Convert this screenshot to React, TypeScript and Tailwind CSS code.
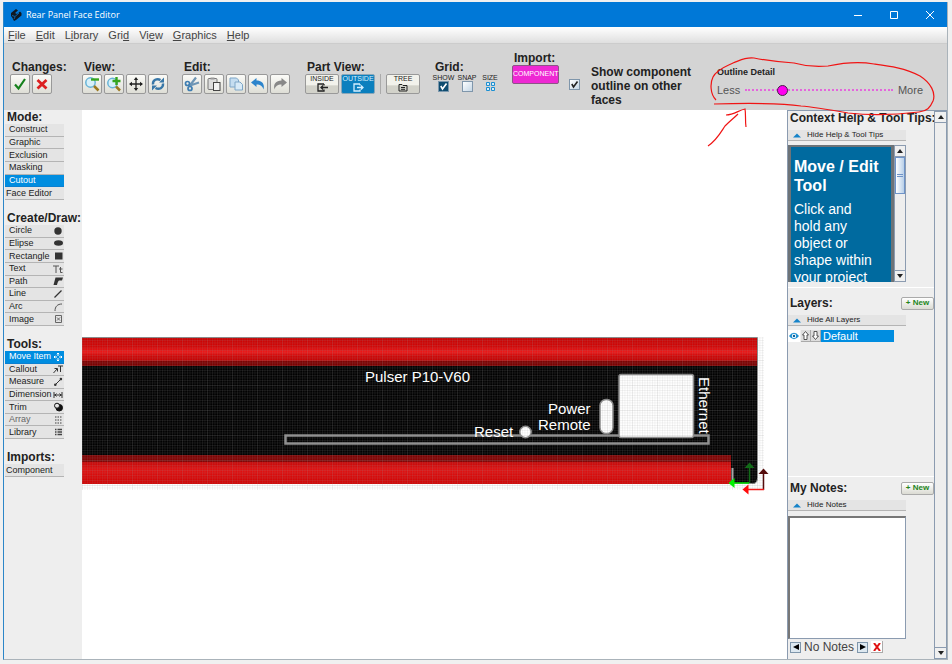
import React, { useState } from 'react';

interface RowItem {
  name: string;
  icon?: React.ReactNode;
  muted?: boolean;
  flush?: boolean;
}

const ICON = 'h-[10px] w-[10px] shrink-0';

const modes: RowItem[] = [
  { name: 'Construct' },
  { name: 'Graphic' },
  { name: 'Exclusion' },
  { name: 'Masking' },
  { name: 'Cutout' },
  { name: 'Face Editor', flush: true },
];

const shapes: RowItem[] = [
  { name: 'Circle', icon: <circle cx="5" cy="5" r="3.7" fill="#333" /> },
  { name: 'Elipse', icon: <ellipse cx="5.5" cy="5" rx="4.5" ry="2.8" fill="#333" /> },
  { name: 'Rectangle', icon: <rect x="2" y="1.5" width="7.5" height="7" fill="#333" /> },
  { name: 'Text', icon: <path d="M0 2h6M3 2v7M6 5h3.500M7.500 3v5.500h2" fill="none" stroke="#555" /> },
  { name: 'Path', icon: <path d="M2.500 1.500H10L9 4.500H6C5 5 4.500 7 4 9H.5z" fill="#333" /> },
  { name: 'Line', icon: <path d="M1.500 8.500l7-7" stroke="#333" strokeWidth="1.300" /> },
  { name: 'Arc', icon: <path d="M2 9c0-4.500 2.500-7 7-7" fill="none" stroke="#555" /> },
  {
    name: 'Image',
    icon: (
      <g fill="none" stroke="#666">
        <path d="M2.500 1.500h6v7h-6z" />
        <path d="M4 3.500l3 3M7 3.500l-3 3" />
      </g>
    ),
  },
];

const tools: RowItem[] = [
  {
    name: 'Move Item',
    icon: <path d="M5 1v3M5 6v3M1 5h3M6 5h3M3.800 2.200L5 1l1.200 1.200M3.800 7.800L5 9l1.200-1.200M2.200 3.800L1 5l1.200 1.200M7.800 3.800L9 5 7.800 6.200" fill="none" stroke="#fff" />,
  },
  { name: 'Callout', icon: <path d="M.5 9L4 5M1.500 4.500H4.500V7.500M5 2H10M7.500 2V8" fill="none" stroke="#333" /> },
  {
    name: 'Measure',
    icon: (
      <g fill="#333">
        <path d="M2 8l6-6" stroke="#333" />
        <circle cx="2.300" cy="7.700" r="1.300" />
        <circle cx="7.900" cy="2.100" r="1.300" />
      </g>
    ),
  },
  { name: 'Dimension', icon: <path d="M1 2v6M9 2v6M1 5h8M3.500 3.500L2 5l1.500 1.500M6.500 3.500L8 5 6.500 6.500" fill="none" stroke="#333" /> },
  {
    name: 'Trim',
    icon: (
      <g stroke="#111">
        <circle cx="6.200" cy="5.700" r="3.300" fill="#111" />
        <circle cx="4" cy="3.700" r="2.500" fill="#e4e4e4" />
      </g>
    ),
  },
  { name: 'Array', muted: true, icon: <path d="M2 2h7M2 5h7M2 8h7" stroke="#777" strokeWidth="1.500" strokeDasharray="1.500 1" /> },
  { name: 'Library', icon: <path d="M2 2.500h1.500M4.500 2.500H9M2 5h1.500M4.500 5H9M2 7.500h1.500M4.500 7.500H9" stroke="#444" strokeWidth="1.500" /> },
];

const menus = [
  ['', 'F', 'ile'],
  ['', 'E', 'dit'],
  ['L', 'i', 'brary'],
  ['Gri', 'd', ''],
  ['Vi', 'e', 'w'],
  ['', 'G', 'raphics'],
  ['', 'H', 'elp'],
];

const SideSection: React.FC<{
  title: string;
  items: RowItem[];
  height: string;
  selected?: string;
  onSelect?: (name: string) => void;
}> = ({ title, items, height, selected, onSelect }) => (
  <section>
    <h2 className="pl-[3px] text-[12px] leading-[14px] font-bold whitespace-nowrap">{title}</h2>
    <div className={`ml-px flex w-[59px] flex-col ${height}`}>
      {items.map((item) => (
        <button
          key={item.name}
          onClick={() => onSelect?.(item.name)}
          className={`flex min-h-0 flex-1 items-center justify-between border-b pr-px text-[9px] leading-[11px] whitespace-nowrap ${
            item.flush ? 'pl-px' : 'pl-1'
          } ${
            item.name === selected
              ? 'border-[#0b7fd0] bg-[#008de0] text-white'
              : 'border-[#b4b4b4] bg-[#e4e4e4]'
          } ${item.muted ? 'text-[#666]' : ''}`}
        >
          {item.name}
          {item.icon && <svg viewBox="0 0 10 10" className={ICON}>{item.icon}</svg>}
        </button>
      ))}
    </div>
  </section>
);

const ToolButton: React.FC<{ label: string; children: React.ReactNode }> = ({ label, children }) => (
  <button
    aria-label={label}
    className="flex h-5 w-5 items-center justify-center rounded-xs border border-[#999] bg-linear-to-b from-[#fbfbf8] to-[#deded6]"
  >
    <svg viewBox="0 0 16 16" className="h-4 w-4">{children}</svg>
  </button>
);

const ToolGroup: React.FC<{ title: string; className?: string; children: React.ReactNode }> = ({ title, className = '', children }) => (
  <div className={`shrink-0 ${className}`}>
    <h2 className="pl-0.5 text-[12px] leading-[14px] font-bold whitespace-nowrap">{title}</h2>
    <div className="flex gap-0.5">{children}</div>
  </div>
);

const ViewButton: React.FC<{ text: string; active?: boolean; children: React.ReactNode }> = ({ text, active, children }) => (
  <button
    className={`flex h-5 w-[34px] flex-col items-center rounded-xs border ${
      active
        ? 'border-[#8ba7b8] bg-[#0b7fbe] text-[#d5efff]'
        : 'border-[#999] bg-linear-to-b from-[#f2f2ec] from-55% to-[#d2d2ca] to-60% text-[#222]'
    }`}
  >
    <span className="text-[7px] leading-[8px]">{text}</span>
    <svg viewBox="0 0 12 9" className="h-[9px] w-3" fill="none" stroke="currentColor" strokeWidth="1.300">{children}</svg>
  </button>
);

const CheckBox: React.FC<{ id: string; dark?: boolean; defaultChecked?: boolean }> = ({ id, dark, defaultChecked }) => {
  const [checked, setChecked] = useState(!!defaultChecked);
  return (
    <span className="relative block h-[11px] w-[11px] shrink-0">
      <input
        id={id}
        type="checkbox"
        checked={checked}
        onChange={(e) => setChecked(e.target.checked)}
        className={`block h-[11px] w-[11px] appearance-none border ${
          dark ? 'border-[#7c98ad] bg-[#0f4c70]' : 'border-[#7f96ab] bg-linear-to-br from-white to-[#c5d7e6]'
        }`}
      />
      {checked && (
        <svg viewBox="0 0 11 11" className="pointer-events-none absolute inset-0 h-[11px] w-[11px]">
          <path d="M2.800 5l1.700 3 4-5.500" fill="none" stroke={dark ? '#fff' : '#222'} strokeWidth="1.600" />
        </svg>
      )}
    </span>
  );
};

const ArrowButton: React.FC<{ label: string; down?: boolean }> = ({ label, down }) => (
  <button aria-label={label} className="flex h-3 w-full shrink-0 items-center justify-center border-y border-[#8b9bb0] bg-[#f0f0f0]">
    <svg viewBox="0 0 8 4" className="h-1 w-2">
      <path d={down ? 'M1 0h6L4 4z' : 'M1 4h6L4 0z'} fill="#222" />
    </svg>
  </button>
);

const CollapseBar: React.FC<{ text: string }> = ({ text }) => (
  <button className="flex h-[11px] w-[118px] items-center gap-1.5 border-b border-[#b4b4b4] bg-[#e4e4e4] pl-[5px] text-[8px] leading-[10px] whitespace-nowrap">
    <svg viewBox="0 0 8 5" className="h-[5px] w-2">
      <path d="M0 4.500h8L4 .5z" fill="#1583c9" />
    </svg>
    {text}
  </button>
);

const PanelHeader: React.FC<{ text: string }> = ({ text }) => (
  <div className="flex items-center justify-between pl-0.5">
    <h2 className="text-[12px] leading-[14px] font-bold">{text}</h2>
    <button className="h-[13px] w-[33px] rounded-xs border border-[#aaa] bg-linear-to-b from-white to-[#dbdbd3] text-[8px] leading-[10px] font-bold whitespace-nowrap text-[#23851b]">
      + New
    </button>
  </div>
);

// Rear panel artwork, drawn at one unit per pixel
const PanelDrawing: React.FC = () => (
  <svg className="block h-full w-full bg-white" fontFamily="Liberation Sans, Arial, sans-serif">
    <defs>
      <pattern id="grid" width="2.500" height="2.500" patternUnits="userSpaceOnUse">
        <path d="M0 .5h2.500M.5 0v2.500" stroke="#999" strokeWidth=".7" strokeOpacity=".18" />
      </pattern>
      <pattern id="grid-major" width="25" height="25" patternUnits="userSpaceOnUse">
        <path d="M0 .5h25M.5 0v25" stroke="#999" strokeWidth="1" strokeOpacity=".08" />
      </pattern>
      <linearGradient id="topRail" x1="0" y1="0" x2="0" y2="1">
        <stop offset="0" stopColor="#c80000" />
        <stop offset=".3" stopColor="#d20404" />
        <stop offset=".5" stopColor="#ec1616" />
        <stop offset=".65" stopColor="#ce0505" />
        <stop offset=".8" stopColor="#c40202" />
        <stop offset=".82" stopColor="#7c0000" />
        <stop offset="1" stopColor="#7c0000" />
      </linearGradient>
      <linearGradient id="bottomRail" x1="0" y1="0" x2="0" y2="1">
        <stop offset="0" stopColor="#7d0000" />
        <stop offset=".23" stopColor="#820202" />
        <stop offset=".25" stopColor="#c80505" />
        <stop offset=".5" stopColor="#e01010" />
        <stop offset="1" stopColor="#cf0000" />
      </linearGradient>
    </defs>
    <path d="M0 227h675v142q0 5-5 5H0z" fill="#000" />
    <path d="M0 227.500h675.500v141q0 5-5 5H650" fill="none" stroke="#888" />
    <rect y="228" width="675" height="28" fill="url(#topRail)" />
    <rect y="345" width="649" height="29" fill="url(#bottomRail)" />
    <path d="M650.500 358v16" stroke="#aaa" strokeWidth="2" />
    <rect x="203.500" y="325.500" width="423" height="8" fill="none" stroke="#8d8d8d" strokeWidth="2.500" />
    <rect x="537" y="264.500" width="74.500" height="63" rx="2" fill="#fff" stroke="#888" strokeWidth="1.500" />
    <rect x="518" y="289.500" width="13" height="34" rx="6" fill="#fff" stroke="#888" strokeWidth="1.500" />
    <circle cx="443.500" cy="322" r="5.700" fill="#fff" stroke="#888" strokeWidth="1.500" />
    <rect y="227" width="682" height="153" fill="url(#grid)" />
    <rect y="227" width="682" height="153" fill="url(#grid-major)" />
    <g fill="#fff" fontSize="15">
      <text x="283" y="272">Pulser P10-V60</text>
      <text x="392" y="327">Reset</text>
      <text x="466" y="304">Power</text>
      <text x="456" y="320">Remote</text>
      <text transform="translate(617 267) rotate(90)">Ethernet</text>
    </g>
    <g strokeWidth="1.500">
      <path d="M667.500 373v-18" stroke="#126b18" />
      <path d="M667.500 352.500l5 5.500h-10z" fill="#126b18" />
      <path d="M667 373h-16" stroke="#00e600" />
      <path d="M646.500 373l6-5v10z" fill="#00f000" />
      <path d="M681.500 380v-18" stroke="#550c0c" />
      <path d="M681.500 358.500l5 5.500h-10z" fill="#550c0c" />
      <path d="M682 379.500h-17" stroke="#f01818" />
      <path d="M660.500 379.500l6-5v10z" fill="#ff0a0a" />
    </g>
  </svg>
);

const App: React.FC = () => {
  const [mode, setMode] = useState('Cutout');
  const [tool, setTool] = useState('Move Item');
  const [detail, setDetail] = useState(23);

  return (
    <div className="flex h-screen min-h-[600px] flex-col bg-[#f0f0f0] pt-0.5 pr-1 pb-1 pl-[3px] font-['Liberation_Sans',Arial,sans-serif] text-[#222]">
      <div className="flex min-h-0 flex-1 flex-col border border-t-0 border-[#aab3ba] border-l-[#2c86c8] bg-[#eee]">
        {/* Title bar */}
        <header className="flex h-[25px] shrink-0 items-center bg-[#0078d7] pr-3 pl-1.5 text-white">
          <svg viewBox="0 0 12 14" className="mr-1 h-[14px] w-3">
            <path d="M1 5l5-4 2 1.500-3 2.500 2 1 3-2.500 1.500 1.500v2.500L6 12l-2 1-1.500-3L1 8z" fill="#101820" />
            <path d="M2 7.500l3 1 4-3.500M4 11l1-2" fill="none" stroke="#0b62a8" />
          </svg>
          <h1 className="font-['Open_Sans',sans-serif] text-[9px]">Rear Panel Face Editor</h1>
          <div className="ml-auto flex items-center gap-[26px]">
            <button aria-label="Minimize">
              <svg viewBox="0 0 10 10" className="h-[10px] w-[10px]"><path d="M1 5.500h8" stroke="#fff" /></svg>
            </button>
            <button aria-label="Maximize">
              <svg viewBox="0 0 10 10" className="h-[10px] w-[10px]"><path d="M1.500 1.500h7v7h-7z" fill="none" stroke="#fff" /></svg>
            </button>
            <button aria-label="Close">
              <svg viewBox="0 0 10 10" className="h-[10px] w-[10px]"><path d="M1 1l8 8M9 1L1 9" stroke="#fff" /></svg>
            </button>
          </div>
        </header>

        {/* Menu bar */}
        <nav className="flex h-[17px] shrink-0 items-center gap-[10px] border-b border-[#ccc] bg-linear-to-b from-white to-[#dfdfdf] pl-1 text-[11px] text-[#444]">
          {menus.map(([before, key, after]) => (
            <button key={before + key + after} className="leading-[14px]">
              {before}<span className="underline">{key}</span>{after}
            </button>
          ))}
        </nav>

        {/* Toolbar */}
        <div className="flex h-[66px] shrink-0 items-start bg-[#d4d4d4] pr-6 pl-1.5">
          <ToolGroup title="Changes:" className="w-[72px] pt-4">
            <ToolButton label="Accept"><path d="M3 8.500l3.500 4L13 3" fill="none" stroke="#15801c" strokeWidth="2.200" /></ToolButton>
            <ToolButton label="Reject"><path d="M3.500 4l9 8.500M12.500 4l-9 8.500" stroke="#dc2020" strokeWidth="2.800" /></ToolButton>
          </ToolGroup>
          <ToolGroup title="View:" className="w-[100px] pt-4">
            <ToolButton label="Zoom out">
              <circle cx="6.500" cy="6.500" r="4.700" fill="#d7f0fa" stroke="#68b4d8" strokeWidth="1.500" />
              <path d="M10 10l4.500 4.500" stroke="#9c781f" strokeWidth="2.500" />
              <path d="M7 3.500h8" stroke="#35a51f" strokeWidth="2.400" />
            </ToolButton>
            <ToolButton label="Zoom in">
              <circle cx="6.500" cy="7" r="4.700" fill="#d7f0fa" stroke="#68b4d8" strokeWidth="1.500" />
              <path d="M10 10.500l4 4" stroke="#9c781f" strokeWidth="2.500" />
              <path d="M6.500 5h8M10.500 1v8" stroke="#35a51f" strokeWidth="2.400" />
            </ToolButton>
            <ToolButton label="Pan">
              <path d="M8 2v12M2 8h12" stroke="#222" strokeWidth="1.300" />
              <path d="M8 1l2.200 3H5.800zM8 15l2.200-3H5.800zM1 8l3-2.200v4.400zM15 8l-3-2.200v4.400z" fill="#222" />
            </ToolButton>
            <ToolButton label="Refresh">
              <path d="M3 8.500C2.500 4 7 2 10.500 4M13 7.500C13.500 12 9 14 5.500 12" fill="none" stroke="#3877a8" strokeWidth="2.400" />
              <path d="M9 6.500h5V1.500zM7 9.500H2v5z" fill="#3877a8" />
            </ToolButton>
          </ToolGroup>
          <ToolGroup title="Edit:" className="w-[123px] pt-4">
            <ToolButton label="Cut">
              <path d="M5.500 10L12 1.500M6 9.500l9-3" stroke="#6f96b5" strokeWidth="2.200" />
              <circle cx="3.500" cy="7.500" r="2" fill="none" stroke="#3f7eb2" strokeWidth="1.700" />
              <circle cx="6" cy="12.500" r="2" fill="none" stroke="#3f7eb2" strokeWidth="1.700" />
            </ToolButton>
            <ToolButton label="Paste">
              <rect x="2" y="2.500" width="9" height="11" rx="1" fill="#ddd" stroke="#777" />
              <path d="M4.500 1.500h4v2h-4z" fill="#999" />
              <rect x="7.500" y="6.500" width="6.500" height="8" fill="#f2f2f2" stroke="#444" />
            </ToolButton>
            <ToolButton label="Copy">
              <path d="M2 2h6.500l2 2v7H2z" fill="#c5ddf0" stroke="#7ea6c7" />
              <path d="M7 6h5l2.500 2.500V14H7z" fill="#d8eaf7" stroke="#7ea6c7" />
            </ToolButton>
            <ToolButton label="Undo"><path d="M1 6.500L6.500 2v2.500C12 4.500 15 8 13.500 13.500 12.500 10 10.500 8.500 6.500 8.500V11z" fill="#2c84cc" /></ToolButton>
            <ToolButton label="Redo"><path d="M15 6.500L9.500 2v2.500C4 4.500 1 8 2.500 13.500 3.500 10 5.500 8.500 9.500 8.500V11z" fill="#888" /></ToolButton>
          </ToolGroup>
          <ToolGroup title="Part View:" className="w-[128px] pt-4">
            <ViewButton text="INSIDE"><path d="M8 1H2v7h6V6.500M8 1v1.500M12 4.500H5M7 2.500l-2 2 2 2" /></ViewButton>
            <ViewButton text="OUTSIDE" active><path d="M8 1H2v7h6V6.500M8 1v1.500M5 4.500h6M9 2.500l2 2-2 2" /></ViewButton>
            <span className="mx-[3px] h-5 w-px bg-[#aaa]" />
            <ViewButton text="TREE"><path d="M2 8V1.500h3l1 1h4V8zM4 4.500h4M4 6.300h4" strokeWidth="1" /></ViewButton>
          </ToolGroup>
          <ToolGroup title="Grid:" className="w-[79px] pt-4">
            <div className="flex gap-[3px] text-[7px] leading-[7px]">
              <label className="flex w-[21px] flex-col items-center" htmlFor="grid-show">SHOW<CheckBox id="grid-show" dark defaultChecked /></label>
              <label className="flex w-5 flex-col items-center" htmlFor="grid-snap">SNAP<CheckBox id="grid-snap" /></label>
              <button className="flex w-5 flex-col items-center">
                SIZE
                <svg viewBox="0 0 11 11" className="h-[11px] w-[11px]" fill="#d9edf8" stroke="#1b8fd2">
                  <path d="M1.500 1.500h3v3h-3zM6.500 1.500h3v3h-3zM1.500 6.500h3v3h-3zM6.500 6.500h3v3h-3z" />
                </svg>
              </button>
            </div>
          </ToolGroup>
          <ToolGroup title="Import:" className="w-[57px] pt-[7px]">
            <button className="h-[19px] w-[47px] rounded-xs border border-[#8c5586] bg-[#ee28d3] text-[7px] text-white">COMPONENT</button>
          </ToolGroup>
          <div className="flex shrink-0 gap-[11px] pt-[21px]">
            <span className="pt-[14px]"><CheckBox id="outline-faces" defaultChecked /></span>
            <label htmlFor="outline-faces" className="w-[104px] text-[12px] leading-[14px] font-bold">Show component outline on other faces</label>
          </div>

          {/* Outline detail slider with its hand-drawn callout */}
          <div className="relative ml-auto w-[206px] shrink-0 pt-[21px]">
            <label htmlFor="detail" className="block text-[9px] leading-[14px] font-bold">Outline Detail</label>
            <div className="flex items-center gap-[5px] pt-1 text-[11px] leading-[14px] text-[#555]">
              <span>Less</span>
              <div className="relative flex flex-1 items-center">
                <span className="pointer-events-none absolute inset-x-0 border-t-2 border-dotted border-[#e466dc]" />
                <input
                  id="detail"
                  type="range"
                  value={detail}
                  onChange={(e) => setDetail(Number(e.target.value))}
                  className="relative h-3 w-full appearance-none bg-transparent [&::-webkit-slider-thumb]:h-[11px] [&::-webkit-slider-thumb]:w-[11px] [&::-webkit-slider-thumb]:appearance-none [&::-webkit-slider-thumb]:rounded-full [&::-webkit-slider-thumb]:border [&::-webkit-slider-thumb]:border-[#442244] [&::-webkit-slider-thumb]:bg-[#ff00f0]"
                />
              </div>
              <span>More</span>
            </div>
            <svg viewBox="0 0 236 100" className="pointer-events-none absolute top-2 -left-3 z-10 h-[100px] w-[236px]" fill="none" stroke="#f01414" strokeWidth="1.200">
              <path d="M11 48C5 42 5 31 8 25C12 17 22 14 28 11C36 8 40 5 49 6C64 9 74 10 89 11C103 15 113 15 123 14C137 11 153 9 169 12C184 14 200 16 215 24C226 31 231 41 228 49C225 56 222 59 214 60C189 63 161 63 143 61C126 58 109 55 96 54C75 51 45 51 9 52" />
              <path d="M3 94C12 88 16 80 20 74C25 69 29 66 33 62M21 63C29 63 34 58 40 57C41 62 40 68 41 75" />
            </svg>
          </div>
        </div>

        <main className="flex min-h-0 flex-1">
          {/* Left tool lists */}
          <aside className="flex w-[78px] shrink-0 flex-col gap-[11px] bg-[#eee]">
            <SideSection title="Mode:" items={modes} height="h-[76px]" selected={mode} onSelect={setMode} />
            <SideSection title="Create/Draw:" items={shapes} height="h-[101px]" selected={tool} onSelect={setTool} />
            <SideSection title="Tools:" items={tools} height="h-[88px]" selected={tool} onSelect={setTool} />
            <SideSection title="Imports:" items={[{ name: 'Component', flush: true }]} height="h-[13px]" />
          </aside>

          <div className="min-w-0 flex-1">
            <PanelDrawing />
          </div>

          {/* Right panels */}
          <aside className="flex w-[160px] shrink-0 border-t border-l border-[#8b9bb0]">
            <div className="flex min-w-0 flex-1 flex-col">
              <section className="h-[177px] border-b border-white">
                <h2 className="pl-0.5 text-[12px] leading-[14px] font-bold whitespace-nowrap">Context Help &amp; Tool Tips:</h2>
                <div className="pt-[5px]"><CollapseBar text="Hide Help & Tool Tips" /></div>
                <div className="mt-1 flex h-[137px] w-[118px]">
                  <div className="min-w-0 flex-1 overflow-hidden border-x-[3px] border-t-2 border-[#6d7378] bg-[#006a9f] pt-[10px] pl-[3px] text-white">
                    <h3 className="text-[16px] leading-[19px] font-bold">Move / Edit Tool</h3>
                    <p className="pt-1.5 text-[14px] leading-[17px]">Click and<br />hold any<br />object or<br />shape within<br />your project</p>
                  </div>
                  <div className="flex w-3 flex-col border-x border-[#8b9bb0] bg-[#eee]">
                    <ArrowButton label="Scroll help up" />
                    <div className="flex h-[37px] flex-col items-center justify-center gap-px border border-[#6e93c8] bg-linear-to-r from-white to-[#b8cfe8]">
                      <span className="h-px w-1.5 bg-[#6e93c8]" />
                      <span className="h-px w-1.5 bg-[#6e93c8]" />
                    </div>
                    <div className="flex-1" />
                    <ArrowButton label="Scroll help down" down />
                  </div>
                </div>
              </section>

              <section className="h-[189px] border-b border-white pt-2">
                <PanelHeader text="Layers:" />
                <div className="pt-[5px]"><CollapseBar text="Hide All Layers" /></div>
                <div className="mt-1 flex h-3 w-[106px]">
                  <button aria-label="Toggle layer visibility" className="w-3 bg-white">
                    <svg viewBox="0 0 12 12" className="h-3 w-3">
                      <path d="M1 6q5-6.500 10 0q-5 6.500-10 0z" fill="#1b8fd2" />
                      <circle cx="6" cy="6" r="2.200" fill="#fff" />
                      <circle cx="6" cy="6" r="1.200" fill="#0b5e96" />
                    </svg>
                  </button>
                  <button aria-label="Move layer up" className="ml-px w-[10px] border-r border-b border-[#aaa] bg-[#ddd]">
                    <svg viewBox="0 0 9 11" className="h-[11px] w-[9px]"><path d="M4.500 1.500L7.500 5H6v4.500H3V5H1.500z" fill="#fff" stroke="#444" strokeWidth=".9" /></svg>
                  </button>
                  <button aria-label="Move layer down" className="w-[10px] border-r border-b border-[#aaa] bg-[#ddd]">
                    <svg viewBox="0 0 9 11" className="h-[11px] w-[9px]"><path d="M4.500 9.500L7.500 6H6V1.500H3V6H1.500z" fill="#fff" stroke="#444" strokeWidth=".9" /></svg>
                  </button>
                  <button className="flex-1 bg-[#008de0] pl-0.5 text-left text-[11px] leading-[12px] text-white">Default</button>
                </div>
              </section>

              <section className="flex min-h-0 flex-1 flex-col pt-1 pb-1">
                <PanelHeader text="My Notes:" />
                <div className="pt-[5px]"><CollapseBar text="Hide Notes" /></div>
                <textarea
                  aria-label="Notes"
                  className="mt-[5px] block w-[118px] flex-1 resize-none border border-t-2 border-l-2 border-[#8b9bb0] border-t-[#777] border-l-[#777] bg-white"
                />
                <div className="flex h-4 items-center gap-[3px] pl-0.5 text-[12px] leading-[14px] text-[#444]">
                  <button aria-label="Previous note" className="flex h-[11px] w-[11px] items-center justify-center border border-[#7f96ab] bg-[#dde8f0]">
                    <svg viewBox="0 0 6 6" className="h-1.5 w-1.5"><path d="M6 0v6L0 3z" /></svg>
                  </button>
                  <span>No Notes</span>
                  <button aria-label="Next note" className="flex h-[11px] w-[11px] items-center justify-center border border-[#7f96ab] bg-[#dde8f0]">
                    <svg viewBox="0 0 6 6" className="h-1.5 w-1.5"><path d="M0 0v6l6-3z" /></svg>
                  </button>
                  <button aria-label="Delete note" className="flex h-3 w-3 items-center justify-center border-r border-b border-[#aaa] bg-white">
                    <svg viewBox="0 0 8 8" className="h-2 w-2"><path d="M1 0l6 8M7 0L1 8" stroke="#e01010" strokeWidth="2" /></svg>
                  </button>
                </div>
              </section>
            </div>
            <div className="flex w-[13px] shrink-0 flex-col border-x border-[#8b9bb0]">
              <ArrowButton label="Scroll panel up" />
              <div className="flex-1" />
              <ArrowButton label="Scroll panel down" down />
            </div>
          </aside>
        </main>
      </div>
    </div>
  );
};

export default App;
